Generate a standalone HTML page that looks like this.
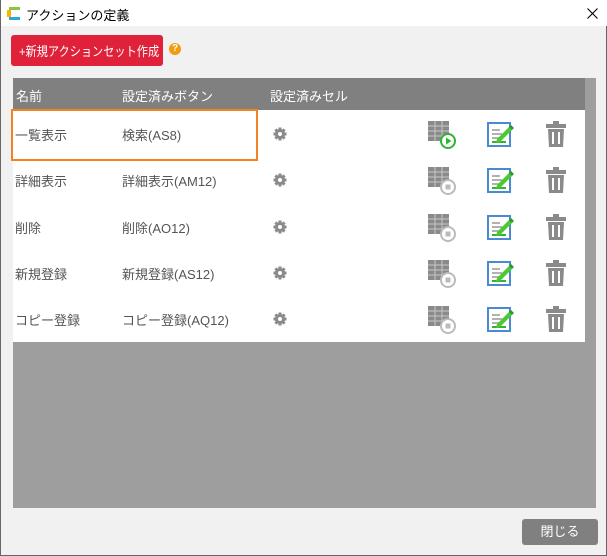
<!DOCTYPE html><html><head><meta charset="utf-8"><style>
*{margin:0;padding:0;box-sizing:border-box}
body{width:607px;height:556px;overflow:hidden;background:#f1f1f1;font-family:"Liberation Sans","Noto Sans CJK JP",sans-serif;position:relative;border:1px solid #666;border-top:none}
.abs{position:absolute;white-space:nowrap}
.title{left:0;top:0;width:606px;height:26px;background:#fff;font-size:13px;color:#000}
.txt{font-size:13px;color:#555}
.hdr{font-size:13px;color:#fff}
</style></head><body>
<div class="abs title">
<svg class="abs" style="left:5px;top:5px" width="16" height="16" viewBox="0 0 16 16"><path d="M3 2h11v3H3z" fill="#8cc63f"/><path d="M1 5h4v7H1z" fill="#f7b500"/><path d="M3 12h11v3H3z" fill="#29a8e0"/></svg>
<span class="abs" style="left:25px;top:5px;font-size:13px">アクションの定義</span>
<svg class="abs" style="left:586px;top:8px" width="11" height="11" viewBox="0 0 11 11"><path d="M0.5 0.5l10 10M10.5 0.5l-10 10" stroke="#000" stroke-width="1.1"/></svg>
</div>
<div class="abs" style="left:10px;top:35px;width:152px;height:31px;background:#e0213a;border-radius:3px"></div>
<span class="abs" style="left:18px;top:41px;font-size:13px;color:#fff;transform:scaleX(0.86);transform-origin:0 0">+新規アクションセット作成</span>
<div class="abs" style="left:168px;top:43px;width:12px;height:12px;border-radius:50%;background:#f39c12;color:#fff;font-size:10px;font-weight:bold;text-align:center;line-height:12px">?</div>
<div class="abs" style="left:12px;top:78px;width:583px;height:430px;background:#9e9e9e"></div>
<div class="abs" style="left:12px;top:78px;width:572px;height:32px;background:#808080"></div>
<div class="abs hdr" style="left:15px;top:86px">名前</div>
<div class="abs hdr" style="left:121px;top:86px">設定済みボタン</div>
<div class="abs hdr" style="left:269px;top:86px">設定済みセル</div>
<div class="abs" style="left:12px;top:110px;width:572px;height:232px;background:#fff"></div>
<div class="abs" style="left:10px;top:109px;width:247px;height:52px;border:2px solid #f58220"></div>
<div id="rows"></div>
<script>
var r=[["一覧表示","検索(AS8)",1],["詳細表示","詳細表示(AM12)",0],["削除","削除(AO12)",0],["新規登録","新規登録(AS12)",0],["コピー登録","コピー登録(AQ12)",0]];
var h="";r.forEach(function(x,i){var c=134+i*46.3;
h+='<div class="abs txt" style="left:14px;top:'+(c-9)+'px">'+x[0]+'</div><div class="abs txt" style="left:121px;top:'+(c-9)+'px">'+x[1]+'</div>';
h+='<svg class="abs" style="left:271px;top:'+(c-8)+'px" width="16" height="16" viewBox="0 0 16 16"><g fill="#8a8a8a"><circle cx="8" cy="8" r="5"/><rect x="6.5" y="1.5" width="3" height="13"/><rect x="1.5" y="6.5" width="13" height="3"/><rect x="6.5" y="1.5" width="3" height="13" transform="rotate(45 8 8)"/><rect x="6.5" y="1.5" width="3" height="13" transform="rotate(-45 8 8)"/></g><circle cx="8" cy="8" r="2" fill="#fff"/></svg>';
var col=x[2]?"#2fb52f":"#bbb";
h+='<svg class="abs" style="left:426px;top:'+(c-14)+'px" width="30" height="30" viewBox="0 0 30 30"><rect x="1" y="1" width="21" height="20" fill="#8a8a8a"/><g stroke="#c8c8c8" stroke-width="1"><path d="M1 6h21M1 11h21M1 16h21M8 1v20M15 1v20"/></g>';
h+='<circle cx="21" cy="21" r="7" fill="#fff" stroke="'+col+'" stroke-width="2"/>'+(x[2]?'<path d="M19 17.5v7l5.5-3.5z" fill="#2fb52f"/>':'<rect x="18.5" y="18.5" width="5" height="5" fill="#bbb"/>')+'</svg>';
h+='<svg class="abs" style="left:486px;top:'+(c-14)+'px" width="28" height="28" viewBox="0 0 28 28"><rect x="1" y="3" width="22" height="23" fill="#fff" stroke="#4a89d4" stroke-width="2"/><g stroke="#999" stroke-width="1.5"><path d="M5 10h8M5 14h10M5 18h8"/></g><path d="M5 22h14" stroke="#2fb52f" stroke-width="2"/><path d="M10 19l12-12 3 3-12 12-4 1z" fill="#4bc832"/><path d="M22 7l2-2 3 3-2 2z" fill="#2a9a2a"/></svg>';
h+='<svg class="abs" style="left:544px;top:'+(c-14)+'px" width="22" height="28" viewBox="0 0 22 28"><g fill="#8a8a8a"><rect x="8" y="1" width="6" height="3"/><rect x="1" y="4" width="20" height="4"/><path d="M3 9h16l-1 18H4z"/></g><g fill="#fff"><rect x="7" y="12" width="2" height="12"/><rect x="13" y="12" width="2" height="12"/></g></svg>';
});document.getElementById("rows").innerHTML=h;
</script>
<div class="abs" style="left:521px;top:519px;width:76px;height:26px;background:#808080;border-radius:3px;color:#fff;font-size:13px;line-height:26px;text-align:center">閉じる</div>
</body></html>
